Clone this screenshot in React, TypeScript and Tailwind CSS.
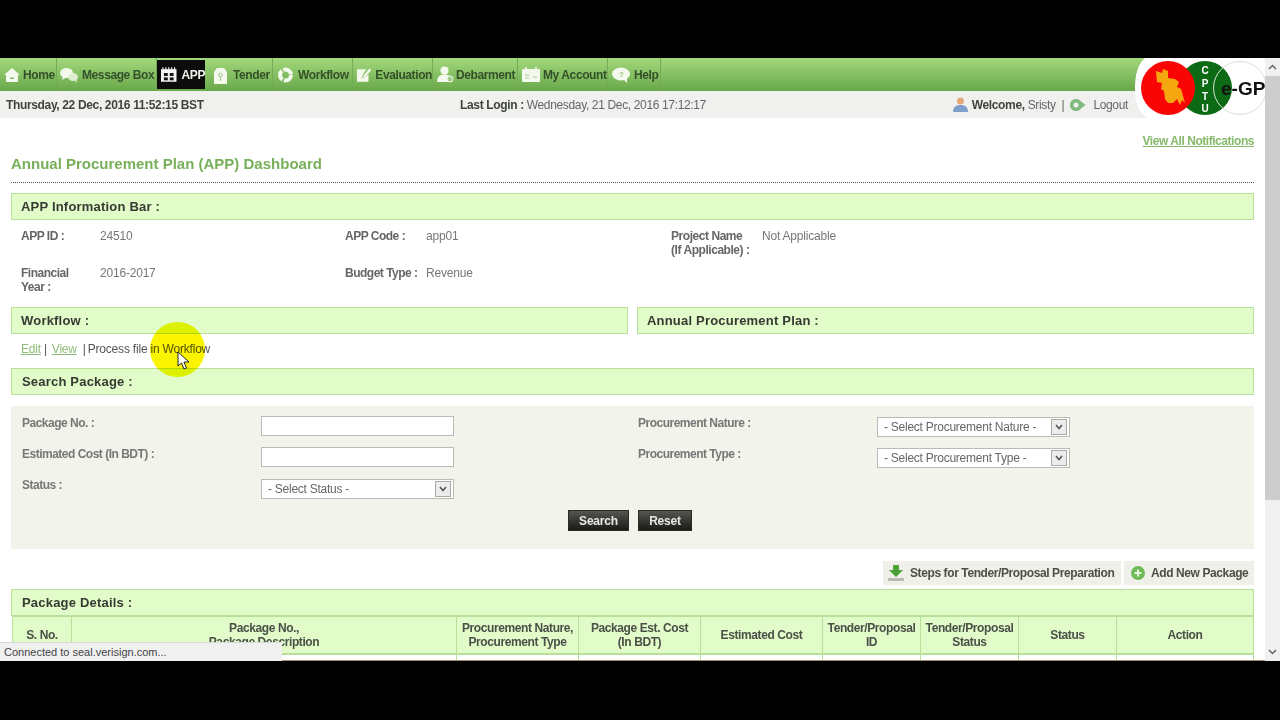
import type { ReactNode } from "react";

const NAV = [
  { label: "Home", icon: "home", w: "w-[57px]", pl: "pl-[4px]", gap: "gap-[3px]" },
  { label: "Message Box", icon: "chat", w: "w-[100px]", pl: "pl-[3px]", gap: "gap-[4px]" },
  { label: "APP", icon: "calendar", w: "w-[48px]", pl: "pl-[4px]", gap: "gap-[5px]", active: true },
  { label: "Tender", icon: "tender", w: "w-[66px]", pl: "pl-[6px]", gap: "gap-[5px]" },
  { label: "Workflow", icon: "cycle", w: "w-[80px]", pl: "pl-[4px]", gap: "gap-[4px]" },
  { label: "Evaluation", icon: "edit", w: "w-[80px]", pl: "pl-[3px]", gap: "gap-[3px]" },
  { label: "Debarment", icon: "person", w: "w-[85px]", pl: "pl-[4px]", gap: "gap-[2px]" },
  { label: "My Account", icon: "card", w: "w-[90px]", pl: "pl-[4px]", gap: "gap-[3px]" },
  { label: "Help", icon: "help", w: "w-[53px]", pl: "pl-[4px]", gap: "gap-[4px]" },
];

const COLS = [
  { label: ["S. No."], w: "w-[60px]" },
  { label: ["Package No.,", "Package Description"], w: "w-[385px]" },
  { label: ["Procurement Nature,", "Procurement Type"], w: "w-[122px]" },
  { label: ["Package Est. Cost", "(In BDT)"], w: "w-[122px]" },
  { label: ["Estimated Cost"], w: "w-[122px]" },
  { label: ["Tender/Proposal", "ID"], w: "w-[98px]" },
  { label: ["Tender/Proposal", "Status"], w: "w-[98px]" },
  { label: ["Status"], w: "w-[98px]" },
  { label: ["Action"], w: "w-[137px]" },
];

function NavIcon({ name }: { name: string }) {
  const c = "#f4f9ee";
  if (name === "home")
    return (
      <svg width="16" height="16" viewBox="0 0 16 16">
        <path d="M8 1 L16 8 L14 8 L14 15 L2 15 L2 8 L0 8 Z" fill={c} />
        <rect x="6" y="10.5" width="4" height="1.5" fill="#8fb878" />
      </svg>
    );
  if (name === "chat")
    return (
      <svg width="18" height="16" viewBox="0 0 18 16">
        <ellipse cx="6.5" cy="6" rx="6.5" ry="5" fill={c} />
        <path d="M3 9 L2 13 L7 10 Z" fill={c} />
        <ellipse cx="13" cy="10" rx="5" ry="4" fill="#dfeecf" />
        <path d="M14 13 L17 16 L16 11 Z" fill="#dfeecf" />
      </svg>
    );
  if (name === "calendar")
    return (
      <svg width="16" height="15" viewBox="0 0 16 15">
        <rect x="0" y="2" width="16" height="13" fill="#f5f5f5" />
        <path d="M2 0V3M5 0V3M8 0V3M11 0V3M14 0V3" stroke="#f5f5f5" strokeWidth="1.2" />
        <rect x="3" y="6" width="4" height="3" fill="#111" />
        <rect x="9" y="6" width="4" height="3" fill="#111" />
        <rect x="3" y="10.5" width="4" height="3" fill="#111" />
        <rect x="9" y="10.5" width="4" height="3" fill="#111" />
      </svg>
    );
  if (name === "tender")
    return (
      <svg width="15" height="18" viewBox="0 0 15 18">
        <path d="M1 6 L4 2 L11 2 L14 6 L14 18 L1 18 Z" fill={c} />
        <circle cx="7.5" cy="9" r="1.8" fill="none" stroke="#9fc588" />
        <path d="M7.5 11V15" stroke="#9fc588" />
      </svg>
    );
  if (name === "cycle")
    return (
      <svg width="17" height="16" viewBox="0 0 17 16">
        <circle cx="8.5" cy="8" r="5.5" fill="none" stroke={c} strokeWidth="4" strokeDasharray="10 1.5" />
      </svg>
    );
  if (name === "edit")
    return (
      <svg width="17" height="16" viewBox="0 0 17 16">
        <path d="M1 2 H11 L8 6 L6 11 L10 10 L13 7 V15 H1 Z" fill={c} />
        <path d="M8 10 L15 2" stroke={c} strokeWidth="2.4" />
      </svg>
    );
  if (name === "person")
    return (
      <svg width="17" height="17" viewBox="0 0 17 17">
        <circle cx="7.5" cy="4.5" r="4" fill={c} />
        <path d="M0 16 C0 10 4 8.5 7.5 8.5 C11 8.5 15 10 15 16 Z" fill={c} />
        <circle cx="13" cy="13" r="3" fill="#a6cc8c" stroke={c} />
      </svg>
    );
  if (name === "card")
    return (
      <svg width="18" height="15" viewBox="0 0 18 15">
        <rect x="0" y="2" width="18" height="13" rx="1" fill={c} />
        <path d="M4 0V3M14 0V3" stroke={c} strokeWidth="1.5" />
        <path d="M3 8H7M3 11H7M11 10H15" stroke="#a9c996" />
      </svg>
    );
  return (
    <svg width="18" height="16" viewBox="0 0 18 16">
      <ellipse cx="9" cy="7" rx="9" ry="6.5" fill={c} />
      <path d="M11 12 L15 16 L15 10 Z" fill={c} />
      <text x="7" y="10" fontSize="8" fill="#9fc588" fontFamily="Liberation Sans">?</text>
    </svg>
  );
}

function Bar({ children, className = "" }: { children: ReactNode; className?: string }) {
  return (
    <div className={`flex h-[27px] items-center border border-[#b9e09b] bg-[#e1fbc9] pl-[9px] text-[13px] font-bold tracking-[0.2px] text-[#363a32] ${className}`}>
      {children}
    </div>
  );
}

function Input() {
  return <div className="h-[20px] w-[193px] border border-[#b8bcb4] bg-white" />;
}

function Select({ label }: { label: string }) {
  return (
    <div className="flex h-[20px] w-[193px] items-center justify-between border border-[#b8bcb4] bg-white pl-[6px] pr-[2px] text-[12px] font-normal tracking-[-0.25px] text-[#666]">
      <span>{label}</span>
      <span className="flex h-[16px] w-[16px] items-center justify-center border border-[#a9aca5] bg-[#ececec]">
        <svg width="8" height="6" viewBox="0 0 8 6">
          <path d="M1 1 L4 4.5 L7 1" fill="none" stroke="#555" strokeWidth="1.6" />
        </svg>
      </span>
    </div>
  );
}

function DarkButton({ label, w }: { label: string; w: string }) {
  return (
    <div className={`flex h-[21px] ${w} items-center justify-center border border-[#2a2b26] bg-gradient-to-b from-[#55564f] to-[#1b1c18] text-[12px] font-bold tracking-[-0.2px] text-[#e8e8e4]`}>
      {label}
    </div>
  );
}

function Logo() {
  return (
    <div className="absolute right-0 top-0 z-10 h-[60px] w-[130px]">
      <svg width="130" height="60" viewBox="0 0 130 60">
        <path d="M10 0 H130 V60 H12 C2 52 0 44 0 30 C0 16 3 6 10 0 Z" fill="#fff" />
        <circle cx="70" cy="30" r="27" fill="#0d6a14" />
        <circle cx="105" cy="30" r="26.5" fill="none" stroke="#d8e2d8" />
        <circle cx="33" cy="30" r="27" fill="#f90505" />
        <path
          d="M21 13 L27 15 L28 11 L33 13 L33 20 L40 21 L44 24 L42 29 L46 31 L48 38 L50 45 L47 42 L45 47 L42 41 L38 45 L33 45 L30 41 L29 33 L26 31 L27 25 L22 24 Z"
          fill="#f5a70f"
        />
        <text x="70" y="16" textAnchor="middle" fontSize="10" fontWeight="700" fill="#fff" fontFamily="Liberation Sans">C</text>
        <text x="70" y="29" textAnchor="middle" fontSize="10" fontWeight="700" fill="#fff" fontFamily="Liberation Sans">P</text>
        <text x="70" y="42" textAnchor="middle" fontSize="10" fontWeight="700" fill="#fff" fontFamily="Liberation Sans">T</text>
        <text x="70" y="54" textAnchor="middle" fontSize="10" fontWeight="700" fill="#fff" fontFamily="Liberation Sans">U</text>
        <text x="86" y="37" fontSize="19" fontWeight="700" fill="#111" fontFamily="Liberation Sans">e-GP</text>
      </svg>
    </div>
  );
}

function Scrollbar() {
  return (
    <div className="flex w-[15px] flex-col bg-[#f0f0f0]">
      <div className="flex h-[18px] items-center justify-center">
        <svg width="9" height="6" viewBox="0 0 9 6">
          <path d="M1 5 L4.5 1.5 L8 5" fill="none" stroke="#666" strokeWidth="1.5" />
        </svg>
      </div>
      <div className="h-[424px] bg-[#cdcdcd]" />
      <div className="flex-1" />
      <div className="flex h-[18px] items-center justify-center">
        <svg width="9" height="6" viewBox="0 0 9 6">
          <path d="M1 1 L4.5 4.5 L8 1" fill="none" stroke="#666" strokeWidth="1.5" />
        </svg>
      </div>
    </div>
  );
}

export default function App() {
  return (
    <div className="flex h-[720px] w-[1280px] flex-col overflow-hidden bg-black font-['Liberation_Sans',Arial,sans-serif]">
      <div className="h-[58px]" />
      <div className="relative flex h-[603px] overflow-hidden bg-white">
        <div className="relative w-[1265px] overflow-hidden">
          <Logo />
          <nav className="flex h-[33px] items-stretch bg-gradient-to-b from-[#a3d87c] to-[#68a84a]">
            {NAV.map((n) => (
              <div
                key={n.label}
                className={`flex ${n.w} items-center ${n.gap} ${n.pl} border-r border-[#74ab58] text-[12px] font-bold tracking-[-0.4px] ${
                  n.active ? "my-[2px] mr-[2px] border-r-0 bg-[#0c0c0c] text-[#eef2ea]" : "text-[#34502a]"
                }`}
              >
                <NavIcon name={n.icon} />
                <span className="whitespace-nowrap">{n.label}</span>
              </div>
            ))}
          </nav>

          <div className="flex h-[27px] items-center bg-[#f0f1ef] pl-[6px] pr-[137px] text-[12px] tracking-[-0.35px] text-[#666]">
            <span className="w-[454px] font-bold text-[#3e433c]">Thursday, 22 Dec, 2016 11:52:15 BST</span>
            <span>
              <b className="text-[#3e433c]">Last Login : </b>Wednesday, 21 Dec, 2016 17:12:17
            </span>
            <span className="ml-auto flex items-center gap-[4px]">
              <svg width="15" height="15" viewBox="0 0 15 15">
                <circle cx="7.5" cy="4" r="3.5" fill="#e2a877" />
                <path d="M0 15 C0 9 4 8 7.5 8 C11 8 15 9 15 15 Z" fill="#7d9fc9" />
              </svg>
              <b className="text-[#3e433c]">Welcome,</b>
              <span className="-ml-[1px]">Sristy</span>
              <span className="ml-[2px]">|</span>
              <svg className="ml-[2px]" width="16" height="12" viewBox="0 0 16 12">
                <path d="M6 0 C2.5 0 0 2.5 0 6 C0 9.5 2.5 12 6 12 C8 12 10 11 11 9.5 L15.5 6 L11 2.5 C10 1 8 0 6 0 Z" fill="#7fb97c" />
                <circle cx="6" cy="6" r="2.5" fill="#f0f1ef" />
              </svg>
              <span className="ml-[3px]">Logout</span>
            </span>
          </div>

          <div className="px-[11px]">
            <div className="flex h-[32px] items-end justify-end text-[12px] font-bold tracking-[-0.45px] text-[#86b96a] underline">
              View All Notifications
            </div>
            <h1 className="mt-[5px] border-b border-dotted border-[#555] pb-[10px] text-[15px] leading-[17px] font-bold text-[#78b05a]">
              Annual Procurement Plan (APP) Dashboard
            </h1>

            <Bar className="mt-[10px]">APP Information Bar :</Bar>

            <div className="mt-[9px] grid h-[78px] grid-cols-[79px_245px_81px_245px_91px_1fr] grid-rows-[37px_1fr] pl-[10px] text-[12px] leading-[14px] tracking-[-0.2px] text-[#777]">
              <b className="tracking-[-0.5px] text-[#666]">APP ID :</b>
              <span>24510</span>
              <b className="tracking-[-0.5px] text-[#666]">APP Code :</b>
              <span>app01</span>
              <b className="tracking-[-0.45px] text-[#666]">
                Project Name
                <br />
                (If Applicable) :
              </b>
              <span>Not Applicable</span>
              <b className="tracking-[-0.5px] text-[#666]">
                Financial
                <br />
                Year :
              </b>
              <span>2016-2017</span>
              <b className="tracking-[-0.5px] text-[#666]">Budget Type :</b>
              <span>Revenue</span>
            </div>

            <div className="flex gap-[9px]">
              <Bar className="w-[617px]">Workflow :</Bar>
              <Bar className="flex-1">Annual Procurement Plan :</Bar>
            </div>

            <div className="flex h-[34px] items-center pb-[4px] pl-[10px] text-[12px] tracking-[-0.2px] text-[#555]">
              <span className="text-[#8fbb78] underline">Edit</span>
              <span className="ml-[3px]">|</span>
              <span className="ml-[5px] text-[#8fbb78] underline">View</span>
              <span className="ml-[6px]">|</span>
              <span className="ml-[2px]">Process file in Workflow</span>
            </div>

            <Bar>
              <span className="ml-[1px]">Search Package :</span>
            </Bar>

            <div className="mt-[11px] h-[143px] bg-[#f2f3ea] pl-[11px] pt-[10px] text-[12px] leading-[14px] tracking-[-0.5px] text-[#777]">
              <div className="grid grid-cols-[239px_377px_239px_1fr] font-bold">
                <span className="h-[31px]">Package No. :</span>
                <Input />
                <span className="h-[31px]">Procurement Nature :</span>
                <div className="pt-[1px]">
                  <Select label="- Select Procurement Nature -" />
                </div>
                <span className="h-[31px]">Estimated Cost (In BDT) :</span>
                <Input />
                <span className="h-[31px]">Procurement Type :</span>
                <div className="pt-[1px]">
                  <Select label="- Select Procurement Type -" />
                </div>
                <span className="h-[31px]">Status :</span>
                <div className="pt-[1px]">
                  <Select label="- Select Status -" />
                </div>
              </div>
              <div className="flex justify-center gap-[9px] pr-[16px] pt-[1px]">
                <DarkButton label="Search" w="w-[61px]" />
                <DarkButton label="Reset" w="w-[54px]" />
              </div>
            </div>

            <div className="mb-[4px] mt-[12px] flex justify-end gap-[3px] text-[12px] font-bold tracking-[-0.4px] text-[#4b5048]">
              <div className="flex h-[24px] w-[238px] items-center gap-[6px] whitespace-nowrap bg-[#f0f0ea] pl-[5px]">
                <svg width="16" height="16" viewBox="0 0 16 16">
                  <path d="M5 0 H11 V5 H15 L8 12 L1 5 H5 Z" fill="#4da335" />
                  <rect x="0" y="13" width="16" height="3" fill="#b9bcb3" />
                </svg>
                Steps for Tender/Proposal Preparation
              </div>
              <div className="flex h-[24px] w-[130px] items-center gap-[6px] whitespace-nowrap bg-[#f0f0ea] pl-[7px]">
                <svg width="14" height="14" viewBox="0 0 14 14">
                  <circle cx="7" cy="7" r="7" fill="#6fbb58" />
                  <path d="M7 3.5V10.5M3.5 7H10.5" stroke="#e8f5e0" strokeWidth="2" />
                </svg>
                Add New Package
              </div>
            </div>

            <Bar className="border-b-0">
              <span className="ml-[1px]">Package Details :</span>
            </Bar>

            <div className="-mt-[1px] ml-[1px] flex h-[40px] border-t-2 border-b-2 border-[#b9e09b] bg-[#e1fbc9] text-[12px] leading-[14px] font-bold tracking-[-0.4px] text-[#4b5048]">
              {COLS.map((col) => (
                <div key={col.label[0] + col.w} className={`flex ${col.w} shrink-0 flex-col items-center justify-center border-r border-[#b9e09b] first:border-l`}>
                  {col.label.map((l) => (
                    <span key={l} className="whitespace-nowrap">
                      {l}
                    </span>
                  ))}
                </div>
              ))}
            </div>
            <div className="ml-[1px] flex h-[10px]">
              {COLS.map((col) => (
                <div key={col.label[0] + col.w} className={`${col.w} shrink-0 border-r border-[#b9e09b] first:border-l`} />
              ))}
            </div>
          </div>

          {/* click highlight sits on top of the text */}
          <div className="absolute left-[150px] top-[264px] h-[55px] w-[55px] rounded-full bg-[#fbf400] mix-blend-multiply" />
          <svg className="absolute left-[177px] top-[293px]" width="13" height="20" viewBox="0 0 13 20">
            <path d="M1 1 V15 L4.5 12 L7 18 L9.5 17 L7 11 H12 Z" fill="#fff" stroke="#222" strokeWidth="1" />
          </svg>

          <div className="absolute bottom-0 left-0 right-0 h-[1px] bg-[#a08c6c]" />
          <div className="absolute bottom-0 left-0 flex h-[19px] w-[282px] items-center border-t border-[#d8d8d8] bg-[#f0f0f0] pl-[4px] text-[11px] text-[#444]">
            Connected to seal.verisign.com...
          </div>
        </div>
        <Scrollbar />
      </div>
    </div>
  );
}
